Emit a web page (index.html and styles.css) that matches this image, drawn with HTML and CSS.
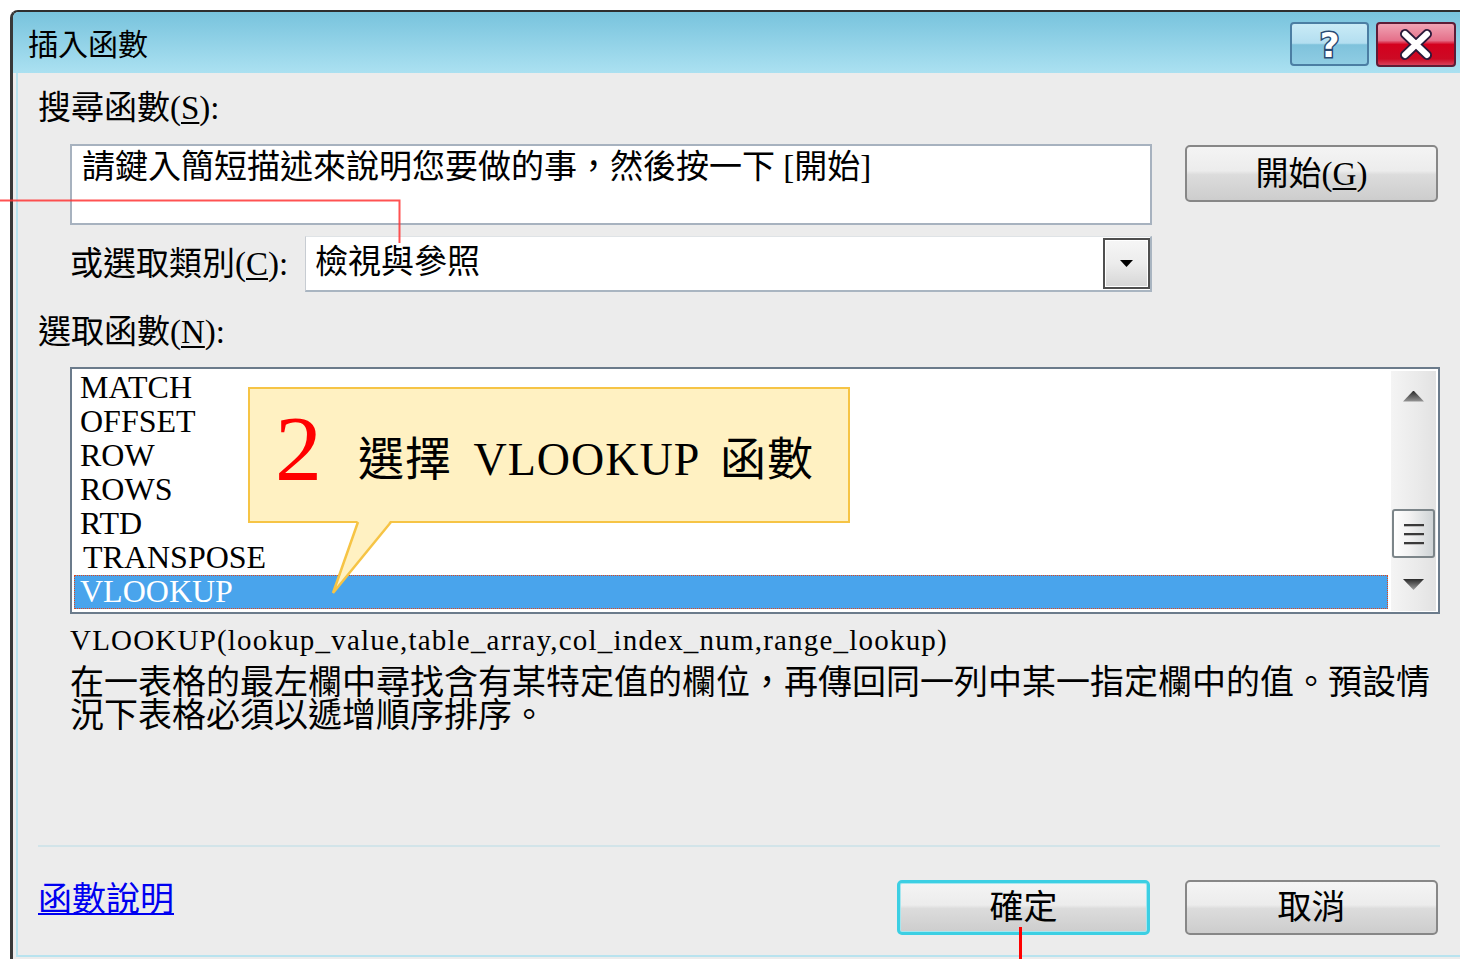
FILE: index.html
```html
<!DOCTYPE html>
<html lang="zh-Hant">
<head>
<meta charset="utf-8">
<title>插入函數</title>
<link rel="stylesheet" href="styles.css">
</head>
<body>
<div class="window">
  <div class="titlebar">
    <span class="title">插入函數</span>
    <div class="caption-btns">
      <span class="cap cap-help">
        <svg width="75" height="40" viewBox="0 0 75 40">
          <text x="37.5" y="33" text-anchor="middle" class="help-glyph">?</text>
        </svg>
      </span>
      <span class="cap cap-close">
        <svg width="76" height="41" viewBox="0 0 76 41">
          <path d="M27 10 L49 31 M49 10 L27 31" stroke="#2b1a3a" stroke-width="10" stroke-linecap="round"/>
          <path d="M27 10 L49 31 M49 10 L27 31" stroke="#ffffff" stroke-width="6" stroke-linecap="round"/>
        </svg>
      </span>
    </div>
  </div>

  <div class="client">
    <div class="label">搜尋函數(<u>S</u>):</div>

    <div class="search-row">
      <div class="search-box">請鍵入簡短描述來說明您要做的事，然後按一下 [開始]</div>
      <div class="btn btn-go">開始(<u>G</u>)</div>
    </div>

    <div class="cat-row">
      <span class="cat-label">或選取類別(<u>C</u>):</span>
      <div class="combo">
        <span class="combo-text">檢視與參照</span>
        <span class="combo-btn"><span class="combo-arrow"></span></span>
      </div>
    </div>

    <div class="label label-fn">選取函數(<u>N</u>):</div>

    <div class="listbox">
      <ul class="items">
        <li>MATCH</li>
        <li>OFFSET</li>
        <li>ROW</li>
        <li>ROWS</li>
        <li>RTD</li>
        <li class="indent">TRANSPOSE</li>
        <li class="selected">VLOOKUP</li>
      </ul>
      <div class="scrollbar">
        <span class="sb-btn"><span class="sb-arrow sb-up"></span></span>
        <span class="sb-gap"></span>
        <span class="sb-thumb"><span class="grip"></span><span class="grip"></span><span class="grip"></span></span>
        <span class="sb-btn sb-btn-down"><span class="sb-arrow sb-down"></span></span>
      </div>

      <div class="callout">
        <span class="step">2</span>
        <span class="callout-text">選擇 VLOOKUP 函數</span>
        <svg class="callout-tail" width="64" height="76" viewBox="0 0 64 76">
          <polygon points="28,0 61,0 3,73" fill="#fff1c2"/>
          <polyline points="28,2 3,73 61,2" fill="none" stroke="#f6c445" stroke-width="2.5"/>
        </svg>
      </div>
    </div>

    <div class="signature">VLOOKUP(lookup_value,table_array,col_index_num,range_lookup)</div>
    <p class="desc">在一表格的最左欄中尋找含有某特定值的欄位，再傳回同一列中某一指定欄中的值。預設情況下表格必須以遞增順序排序。</p>

    <div class="sep"></div>

    <div class="footer">
      <a class="help-link" href="#">函數說明</a>
      <div class="footer-btns">
        <div class="btn btn-ok">確定</div>
        <div class="btn btn-cancel">取消</div>
      </div>
    </div>
  </div>
</div>

<svg class="guides" width="1460" height="959" viewBox="0 0 1460 959">
  <polyline points="0,200.5 399.5,200.5 399.5,243" fill="none" stroke="#ff3434" stroke-opacity="0.85" stroke-width="2"/>
  <line x1="1020.5" y1="927" x2="1020.5" y2="959" stroke="#ff0000" stroke-width="3"/>
</svg>
</body>
</html>
```

FILE: styles.css
```css
* { box-sizing: border-box; }

html, body {
  margin: 0;
  padding: 0;
}

body {
  width: 1460px;
  height: 959px;
  overflow: hidden;
  position: relative;
  background: #ffffff;
  color: #000;
  font-family: "Liberation Serif", "Noto Sans CJK TC", serif;
}

/* window frame */
.window {
  margin: 10px 0 0 10px;
  width: 1450px;
  height: 949px;
  border-top: 2px solid #2e2e2e;
  border-left: 3px solid #383838;
  border-top-left-radius: 8px;
  background: #ececec;
  overflow: hidden;
}

.titlebar {
  height: 61px;
  display: flex;
  align-items: flex-start;
  justify-content: space-between;
  padding: 0 4px 0 15px;
  background: linear-gradient(#78c3dd, #abe1f1);
}

.title {
  margin-top: 13px;
  font-size: 30px;
  line-height: 40px;
}

.caption-btns {
  display: flex;
  gap: 7px;
  padding-top: 10px;
}

.cap {
  display: block;
  height: 44px;
  border-radius: 4px;
}

.cap svg { display: block; }

.cap-help {
  width: 79px;
  border: 2px solid #4b7ea3;
  background: linear-gradient(#c9ebf6 0%, #b3def0 48%, #7fc2dc 52%, #8fcde3 100%);
}

.help-glyph {
  font-family: "DejaVu Sans", sans-serif;
  font-weight: bold;
  font-size: 34px;
  fill: #ffffff;
  stroke: #2a4a72;
  stroke-width: 3px;
  paint-order: stroke;
}

.cap-close {
  width: 80px;
  height: 45px;
  border: 2px solid #5e1c36;
  background: linear-gradient(#f0a4b4 0%, #e5708a 40%, #d4001e 50%, #cc0a24 85%, #d8405a 100%);
}

/* dialog body */
.client {
  display: flow-root;
  margin-left: 3px;
  height: 884px;
  padding: 0 0 0 20px;
  border-left: 2px solid #b8e3ef;
  border-bottom: 2px solid #b8e3ef;
}

.label {
  margin-top: 15px;
  font-size: 33px;
  line-height: 40px;
}

.label-fn { margin-top: 20px; }

u { text-decoration-thickness: 2px; text-underline-offset: 3px; }

.search-row {
  display: flex;
  align-items: flex-start;
  margin: 16px 0 0 32px;
}

.search-box {
  width: 1082px;
  height: 81px;
  padding: 1px 10px;
  background: #ffffff;
  border: 2px solid #a7b2bf;
  font-size: 33px;
  line-height: 40px;
}

.btn {
  display: flex;
  align-items: center;
  justify-content: center;
  width: 253px;
  border: 2px solid #878787;
  border-radius: 5px;
  background: linear-gradient(#f4f4f4 0%, #ececec 45%, #dcdcdc 52%, #cdcdcd 100%);
  font-size: 33px;
  line-height: 40px;
}

.btn-go {
  height: 57px;
  margin: 1px 0 0 33px;
}

.cat-row {
  display: flex;
  align-items: center;
  margin: 11px 0 0 32px;
  height: 56px;
}

.cat-label {
  width: 235px;
  font-size: 33px;
  line-height: 40px;
}

.combo {
  display: flex;
  align-items: stretch;
  width: 847px;
  height: 56px;
  background: #ffffff;
  border-left: 1px solid #c7ccd2;
  border-top: 1px solid #dfe3e6;
  border-right: 2px solid #a9b5c1;
  border-bottom: 2px solid #a9b5c1;
}

.combo-text {
  flex: 1;
  padding: 5px 0 0 9px;
  font-size: 33px;
  line-height: 40px;
}

.combo-btn {
  width: 47px;
  margin: 1px 0 1px 0;
  display: flex;
  align-items: center;
  justify-content: center;
  border: 2px solid #4f4f4f;
  box-shadow: inset 0 0 0 1px #ffffff;
  background: linear-gradient(#f6f6f6 0%, #ececec 50%, #d6d6d6 100%);
}

.combo-arrow {
  width: 13px;
  height: 7px;
  background: #000;
  clip-path: polygon(0 0, 100% 0, 50% 100%);
}

/* function list */
.listbox {
  position: relative;
  display: flex;
  margin: 15px 0 0 32px;
  width: 1370px;
  height: 247px;
  border: 2px solid #6b7b8b;
  background: #ffffff;
}

.items {
  list-style: none;
  margin: 0;
  padding: 2px 0 0 2px;
  width: 1316px;
}

.items li {
  height: 34px;
  padding-left: 5px;
  border: 1px dotted transparent;
  font-size: 32px;
  line-height: 31px;
}

.items li.indent { padding-left: 8px; }

.items li.selected {
  background: #49a4ec;
  color: #ffffff;
  border-color: #e0461a;
}

.scrollbar {
  display: flex;
  flex-direction: column;
  width: 45px;
  margin: 2px 2px 1px 3px;
  background: linear-gradient(90deg, #f4f4f4 0%, #eaeaea 60%, #e2e2e2 100%);
}

.sb-btn {
  height: 50px;
  display: flex;
  align-items: center;
  justify-content: center;
}

.sb-btn-down { flex: 1; height: auto; }

.sb-gap { height: 88px; }

.sb-arrow {
  width: 21px;
  height: 11px;
}

.sb-up {
  background: linear-gradient(#2a2a2a, #9a9a9a);
  clip-path: polygon(50% 0, 100% 100%, 0 100%);
}

.sb-down {
  background: linear-gradient(#2a2a2a, #a0a0a0);
  clip-path: polygon(0 0, 100% 0, 50% 100%);
}

.sb-thumb {
  height: 49px;
  margin: 0 1px;
  display: flex;
  flex-direction: column;
  align-items: center;
  justify-content: center;
  gap: 7px;
  border: 2px solid #7c8589;
  border-radius: 3px;
  background: linear-gradient(90deg, #ffffff 0%, #f2f2f2 40%, #cfd4d6 100%);
}

.grip {
  width: 20px;
  height: 2px;
  background: #3a3a3a;
  box-shadow: 0 1px 0 #bcbcbc;
}

/* annotation balloon */
.callout {
  position: absolute;
  left: 176px;
  top: 18px;
  width: 602px;
  height: 136px;
  display: flex;
  align-items: center;
  background: #fff1c2;
  border: 2px solid #f6c445;
}

.step {
  margin: 0 0 14px 25px;
  color: #ff0000;
  font-family: "Liberation Serif", serif;
  font-size: 94px;
  line-height: 94px;
}

.callout-text {
  margin: 10px 0 0 36px;
  font-size: 46px;
  line-height: 50px;
  letter-spacing: 1px;
  word-spacing: 9px;
}

.callout-tail {
  position: absolute;
  left: 80px;
  top: 131px;
}

/* description */
.signature {
  margin: 10px 0 0 32px;
  font-size: 29px;
  line-height: 33px;
  letter-spacing: 1.2px;
}

.desc {
  margin: 9px 0 0 32px;
  width: 1372px;
  font-size: 34px;
  line-height: 33px;
}

.sep {
  margin-top: 113px;
  width: 1402px;
  height: 2px;
  background: #d2e4e9;
}

.footer {
  display: flex;
  align-items: flex-start;
  justify-content: space-between;
  width: 1402px;
  height: 55px;
  margin-top: 33px;
  padding-right: 2px;
}

.help-link {
  color: #0000f0;
  font-size: 34px;
  line-height: 40px;
  text-decoration: underline;
  text-decoration-thickness: 2px;
  text-underline-offset: 2px;
}

.footer-btns {
  display: flex;
  gap: 35px;
}

.btn-ok,
.btn-cancel {
  height: 55px;
  font-size: 34px;
}

.btn-ok {
  border: 3px solid #3ccfe3;
  box-shadow: inset 0 0 0 1px #a6e6ef;
}

.guides {
  position: absolute;
  left: 0;
  top: 0;
  pointer-events: none;
}
```
